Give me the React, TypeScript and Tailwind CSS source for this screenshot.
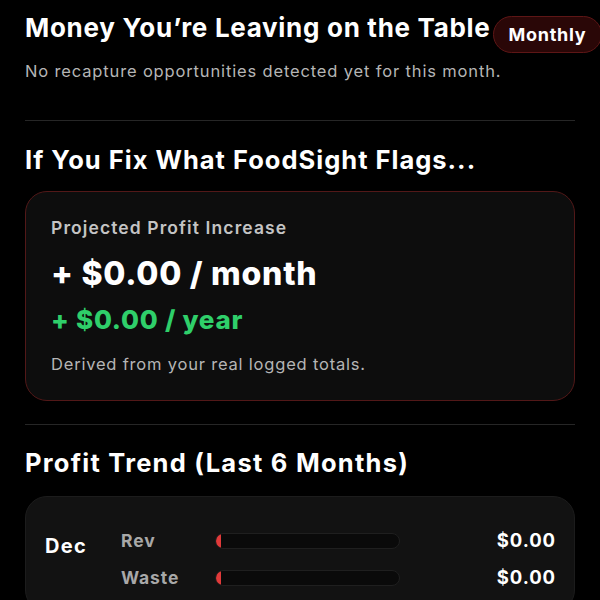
import React from "react";

const rows = [
  { label: "Rev", value: "$0.00" },
  { label: "Waste", value: "$0.00" },
];

export default function App() {
  return (
    <div
      className="w-[600px] h-[600px] overflow-hidden bg-black text-white px-[25px]"
      style={{ fontFamily: "Inter, 'Noto Sans', sans-serif" }}
    >
      {/* Money left on table */}
      <div className="flex items-start pt-[13px] whitespace-nowrap">
        <h2 className="text-[26px] font-bold tracking-[0.7px] leading-[30px] shrink-0">
          Money You’re Leaving on the Table
        </h2>
        <span className="ml-[2px] mt-[3px] shrink-0 rounded-full border border-[#5e1616] bg-[#2a0707] px-[15px] h-[37px] flex items-center text-[18px] font-bold tracking-[0.7px]">
          Monthly
        </span>
      </div>
      <p className="mt-[7px] text-[16.5px] tracking-[0.85px] text-[#b5b5b5] leading-[22px]">
        No recapture opportunities detected yet for this month.
      </p>
      <div className="mt-[38px] h-px bg-[#262626]" />

      {/* Projection */}
      <h2 className="mt-[24px] text-[25.5px] font-bold tracking-[1px] leading-[30px]">
        If You Fix What FoodSight Flags...
      </h2>
      <div className="mt-[16px] h-[210px] rounded-[22px] border border-[#521818] bg-[#0d0d0d] px-[25px] pt-[24px]">
        <div className="text-[17.5px] font-semibold tracking-[1.1px] text-[#c4c4c4] leading-[24px]">
          Projected Profit Increase
        </div>
        <div className="mt-[14px] text-[32px] font-extrabold tracking-[0.75px] leading-[40px]">
          + $0.00 / month
        </div>
        <div className="mt-[10px] text-[26px] font-extrabold tracking-[0.75px] leading-[32px] text-[#2fcf6a]">
          + $0.00 / year
        </div>
        <div className="mt-[17px] text-[16.5px] tracking-[0.8px] text-[#b5b5b5] leading-[22px]">
          Derived from your real logged totals.
        </div>
      </div>
      <div className="mt-[23px] h-px bg-[#262626]" />

      {/* Trend */}
      <h2 className="mt-[23px] text-[25.5px] font-bold tracking-[1.25px] leading-[30px]">
        Profit Trend (Last 6 Months)
      </h2>
      <div className="mt-[18px] rounded-[22px] border border-[#1c1c1c] bg-[#121212] pl-[19px] pr-[18px] pt-[31px] pb-[20px] flex">
        <div className="w-[76px] pt-[5px] text-[20px] font-bold tracking-[1.3px] leading-[26px]">Dec</div>
        <div className="flex-1 flex flex-col gap-[11px]">
          {rows.map((r) => (
            <div key={r.label} className="flex items-center h-[26px]">
              <div className="w-[94px] text-[17.5px] font-bold tracking-[0.9px] text-[#a8a8a8]">{r.label}</div>
              <div className="relative w-[185px] h-[16px] rounded-full border border-[#1f1f1f] bg-[#0a0a0a] overflow-hidden">
                <div className="absolute left-0 top-0 h-full w-[5px] rounded-l-full bg-[#e03a3a]" />
              </div>
              <div className="flex-1 text-right text-[18.5px] font-bold tracking-[0.9px]">{r.value}</div>
            </div>
          ))}
        </div>
      </div>
    </div>
  );
}
